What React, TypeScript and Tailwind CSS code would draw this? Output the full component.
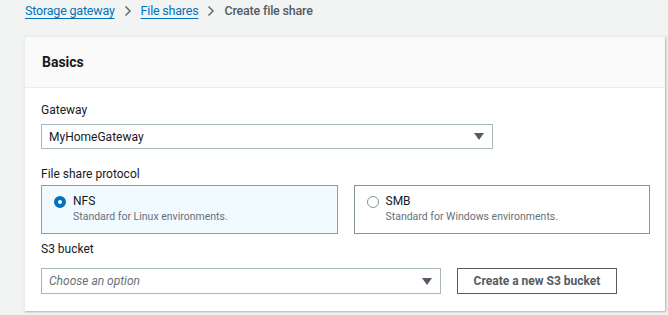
const font = { fontFamily: "Roboto, 'Liberation Sans', Arial, sans-serif" };

const Chevron = () => (
  <svg width="8" height="12" viewBox="0 0 8 12" className="mx-[9px]">
    <path d="M1.5 1.5 6 6l-4.5 4.5" fill="none" stroke="#687078" strokeWidth="1.6" />
  </svg>
);

const Caret = () => (
  <svg width="10" height="7" viewBox="0 0 10 7">
    <path d="M0 0h10L5 7z" fill="#545b64" />
  </svg>
);

const Radio = ({ checked }: { checked?: boolean }) =>
  checked ? (
    <span className="block w-[12px] h-[12px] rounded-full border-[4px] border-[#0073bb] bg-white" />
  ) : (
    <span className="block w-[12px] h-[12px] rounded-full border border-[#879596] bg-white" />
  );

const Tile = ({ title, desc, checked }: { title: string; desc: string; checked?: boolean }) => (
  <div
    className={
      checked
        ? "flex-1 h-[49px] border border-[#44b9d6] bg-[#f1faff] flex pl-[12px] pt-[10px]"
        : "flex-1 h-[49px] border border-[#879596] bg-white flex pl-[12px] pt-[10px]"
    }
  >
    <div>
      <Radio checked={checked} />
    </div>
    <div className="ml-[7px] -mt-[3px]">
      <div className="text-[12px] leading-[16px] text-[#16191f]">{title}</div>
      <div className="text-[10.5px] leading-[14px] mt-[1px] text-[#687078]">{desc}</div>
    </div>
  </div>
);

export default function App() {
  return (
    <div className="w-[668px] h-[315px] bg-[#f2f3f3] overflow-hidden" style={font}>
      <div className="h-[22px] pl-[25px] flex items-center text-[12.5px] tracking-[-0.2px]">
        <a className="text-[#0073bb] underline underline-offset-[3px]">Storage gateway</a>
        <Chevron />
        <a className="text-[#0073bb] underline underline-offset-[3px]">File shares</a>
        <Chevron />
        <span className="text-[#545b64] font-medium">Create file share</span>
      </div>

      <div className="ml-[24px] mt-[14px] w-[641px] h-[275px] bg-white shadow-[1px_1px_2px_rgba(0,28,36,0.3)] border-t border-l border-[#eaeded]">
        <div className="h-[51px] bg-[#fafafa] border-b border-[#eaeded] flex items-center pl-[17px]">
          <h2 className="text-[14px] font-bold text-[#16191f]">Basics</h2>
        </div>

        <div className="pl-[16px] pr-[15px]">
          <div className="mt-[14px] text-[12px] leading-[16px] text-[#16191f]">Gateway</div>
          <div className="mt-[6px] w-[452px] h-[25px] border border-[#aab7b8] flex items-center justify-between pl-[7px] pr-[8px]">
            <span className="text-[12px] text-[#16191f]">MyHomeGateway</span>
            <Caret />
          </div>

          <div className="mt-[17px] text-[12px] leading-[16px] text-[#16191f]">File share protocol</div>
          <div className="mt-[3px] flex gap-[16px]">
            <Tile checked title="NFS" desc="Standard for Linux environments." />
            <Tile title="SMB" desc="Standard for Windows environments." />
          </div>

          <div className="mt-[7px] text-[12px] leading-[16px] text-[#16191f]">S3 bucket</div>
          <div className="mt-[11px] flex gap-[16px]">
            <div className="w-[400px] h-[26px] border border-[#aab7b8] flex items-center justify-between pl-[7px] pr-[8px]">
              <span className="text-[12px] italic text-[#687078]">Choose an option</span>
              <Caret />
            </div>
            <button className="w-[160px] h-[26px] border border-[#545b64] text-[12px] font-bold text-[#545b64] bg-white">
              Create a new S3 bucket
            </button>
          </div>
        </div>
      </div>
    </div>
  );
}
